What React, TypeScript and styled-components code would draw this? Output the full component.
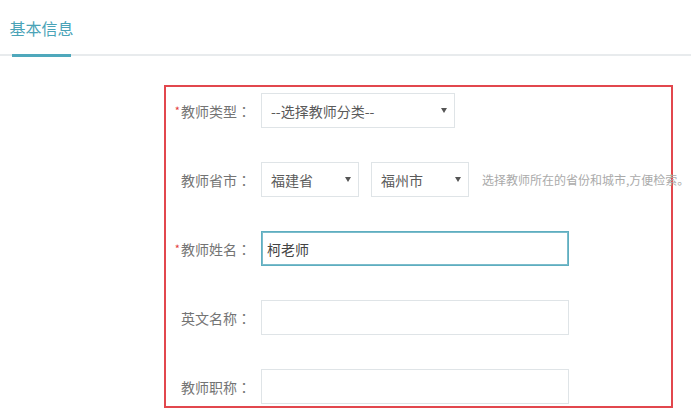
import React, { useEffect, useRef } from "react";
import styled, { createGlobalStyle } from "styled-components";

const Global = createGlobalStyle`
  html, body { margin: 0; padding: 0; background: #fff; }
  body {
    font-family: "Noto Sans CJK SC", "Noto Sans", "Liberation Sans", sans-serif;
    color: #666;
  }
  * { box-sizing: border-box; }
`;

const Page = styled.div`
  width: 691px;
  height: 420px;
  overflow: hidden;
`;

const TabBar = styled.div`
  display: flex;
  height: 56px;
  border-bottom: 2px solid #e8ebed;
`;

const Tab = styled.div<{ $active?: boolean }>`
  margin-left: 12px;
  width: 59px;
  height: 57px;
  display: flex;
  align-items: center;
  justify-content: center;
  padding-top: 1px;
  font-size: 16px;
  white-space: nowrap;
  color: ${(p) => (p.$active ? "#4aa3b7" : "#666")};
  border-bottom: 3px solid ${(p) => (p.$active ? "#4fa8bc" : "transparent")};
`;

const FormBox = styled.div`
  margin: 29px 0 0 164px;
  width: 509px;
  height: 323px;
  border: 2px solid #e2474d;
  padding: 6px 0 3px;
  display: flex;
  flex-direction: column;
  gap: 35px;
`;

const Row = styled.div`
  display: grid;
  grid-template-columns: 85px auto;
  column-gap: 10px;
  align-items: center;
  height: 34px;
`;

const Label = styled.label`
  text-align: right;
  font-size: 14px;
  color: #747474;
  white-space: nowrap;
`;

const Colon = styled.span`
  font-family: "Noto Sans CJK TC", "Noto Sans CJK SC", sans-serif;
`;

const Star = styled.span`
  color: #e4393c;
  font-size: 11px;
  vertical-align: 2px;
  margin-right: 1px;
`;

const Controls = styled.div`
  display: flex;
  align-items: center;
  gap: 12px;
`;

const SelectWrap = styled.div<{ $w: number }>`
  position: relative;
  width: ${(p) => p.$w}px;
  height: 35px;
  &::after {
    content: "";
    position: absolute;
    right: 8px;
    top: 15px;
    border-left: 3px solid transparent;
    border-right: 3px solid transparent;
    border-top: 5px solid #555;
    pointer-events: none;
  }
`;

const Select = styled.select`
  appearance: none;
  -webkit-appearance: none;
  width: 100%;
  height: 100%;
  border: 1px solid #dfe4e7;
  border-radius: 0;
  background: #fff;
  padding: 0 20px 0 9px;
  font-family: inherit;
  font-size: 14px;
  color: #5a5a5a;
  outline: none;
`;

const Input = styled.input<{ $focus?: boolean }>`
  width: 308px;
  height: 35px;
  border: 1px solid ${(p) => (p.$focus ? "#5eaec0" : "#dfe4e7")};
  box-shadow: ${(p) => (p.$focus ? "inset 0 0 0 1px #7bbccb" : "none")};
  border-radius: 0;
  padding: 0 5px;
  font-family: inherit;
  font-size: 14px;
  color: #444;
  caret-color: #333;
  outline: none;
`;

const Hint = styled.span`
  margin-left: 1px;
  font-size: 12px;
  color: #aaa;
  white-space: nowrap;
`;

export default function App() {
  const nameRef = useRef<HTMLInputElement>(null);
  useEffect(() => {
    const el = nameRef.current;
    if (el) {
      el.focus();
      const n = el.value.length;
      el.setSelectionRange(n, n);
    }
  }, []);

  return (
    <Page>
      <Global />
      <TabBar>
        <Tab $active>基本信息</Tab>
      </TabBar>
      <FormBox>
        <Row>
          <Label>
            <Star>*</Star>教师类型<Colon>：</Colon>
          </Label>
          <Controls>
            <SelectWrap $w={194}>
              <Select defaultValue="">
                <option value="">--选择教师分类--</option>
              </Select>
            </SelectWrap>
          </Controls>
        </Row>
        <Row>
          <Label>
            教师省市<Colon>：</Colon>
          </Label>
          <Controls>
            <SelectWrap $w={98}>
              <Select defaultValue="fj">
                <option value="fj">福建省</option>
              </Select>
            </SelectWrap>
            <SelectWrap $w={98}>
              <Select defaultValue="fz">
                <option value="fz">福州市</option>
              </Select>
            </SelectWrap>
            <Hint>选择教师所在的省份和城市,方便检索。</Hint>
          </Controls>
        </Row>
        <Row>
          <Label>
            <Star>*</Star>教师姓名<Colon>：</Colon>
          </Label>
          <Controls>
            <Input ref={nameRef} $focus defaultValue="柯老师" />
          </Controls>
        </Row>
        <Row>
          <Label>
            英文名称<Colon>：</Colon>
          </Label>
          <Controls>
            <Input />
          </Controls>
        </Row>
        <Row>
          <Label>
            教师职称<Colon>：</Colon>
          </Label>
          <Controls>
            <Input />
          </Controls>
        </Row>
      </FormBox>
    </Page>
  );
}
